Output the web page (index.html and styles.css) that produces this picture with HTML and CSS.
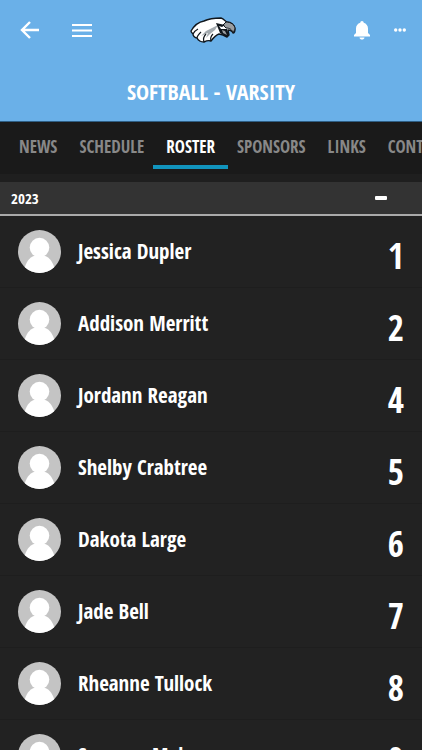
FILE: index.html
```html
<!DOCTYPE html>
<html lang="en">
<head>
    <meta charset="UTF-8" />
    <meta name="viewport" content="width=device-width, initial-scale=1.0" />
    <title>Softball - Varsity</title>
    <link rel="stylesheet" href="styles.css">
</head>
<body>
    <svg class="sprite" aria-hidden="true">
        <symbol id="avatar" viewBox="0 0 44 44">
            <circle cx="22" cy="22" r="22" fill="#c4c4c4"/>
            <ellipse cx="22" cy="18" rx="10" ry="10" fill="#fff"/>
            <path d="M7 38C9 31 13 27 18 26H26C31 27 35 31 37 38A22 22 0 0 1 7 38Z" fill="#fff"/>
        </symbol>
    </svg>

    <header class="header">
        <div class="topbar">
            <div class="side">
                <button class="icon-btn" aria-label="Back">
                    <svg width="20" height="20" viewBox="0 0 20 20" fill="none" stroke="#fff" stroke-width="2.4">
                        <path d="M10 2L2 10L10 18M2 10H19"/>
                    </svg>
                </button>
                <button class="icon-btn" aria-label="Menu">
                    <svg width="20" height="20" viewBox="0 0 20 20" stroke="#fff" stroke-width="2.2">
                        <path d="M0 5H20M0 10.500H20M0 16H20"/>
                    </svg>
                </button>
            </div>
            <a class="logo" href="#" aria-label="Home">
                <svg width="46" height="26" viewBox="0 0 46 26">
                    <path d="M1 14C4 9 8 5 14 4C20 1 26 1 31 1C34 2 35 4 37 5C41 5 45 8 45 12C45 14 45 16 43 16C42 13 40 13 38 13L39 18L37 20L33 18L29 17C26 18 24 20 21 24C18 23 16 24 14 25C11 25 8 23 7 21C5 21 3 19 3 17C2 16 1 15 1 14Z" fill="#fff" stroke="#10161c" stroke-width="1.4" stroke-linejoin="round"/>
                    <path d="M16 14L28 8L25 13L20 17L16 21L18 16L11 19Z" fill="#a4abb0"/>
                    <path d="M36 5C41 5 45 8 45 12L43 16C42 12 39 11 36 11L33 8Z" fill="#9a9da0" stroke="#10161c" stroke-width="1"/>
                    <path d="M3 17C4 15 6 13 8 12M7 21C7 19 9 17 11 15M14 25C13 22 14 19 16 17M21 24C20 21 21 19 23 17" fill="none" stroke="#10161c" stroke-width="1.2"/>
                    <path d="M26 6L35 8L32 10L29 9L31 12L37 12L39 18L37 20L30 16L28 11Z" fill="#10161c"/>
                    <path d="M32 13L35 14L37 18L33 16Z" fill="#9a9da0"/>
                </svg>
            </a>
            <div class="side side-right">
                <button class="icon-btn" aria-label="Notifications">
                    <svg width="16" height="20" viewBox="0 0 16 20" fill="#fff">
                        <path d="M8 1C9 1 9.700 1.800 9.700 2.700C12.400 3.500 14 5.700 14 8.500V13L16 15V16.500H0V15L2 13V8.500C2 5.700 3.600 3.500 6.300 2.700C6.300 1.800 7 1 8 1ZM5.500 17.500H10.500C10.300 19 9.300 19.600 8 19.600C6.700 19.600 5.700 19 5.500 17.500Z"/>
                    </svg>
                </button>
                <button class="icon-btn" aria-label="More">
                    <svg width="12" height="4" viewBox="0 0 12 4" fill="#fff">
                        <circle cx="1.700" cy="2" r="1.700"/>
                        <circle cx="6" cy="2" r="1.700"/>
                        <circle cx="10.300" cy="2" r="1.700"/>
                    </svg>
                </button>
            </div>
        </div>
        <h1 class="title">SOFTBALL - VARSITY</h1>
    </header>

    <nav class="tabs">
        <a class="tab" href="#">NEWS</a>
        <a class="tab" href="#">SCHEDULE</a>
        <a class="tab active" href="#" aria-current="page">ROSTER</a>
        <a class="tab" href="#">SPONSORS</a>
        <a class="tab" href="#">LINKS</a>
        <a class="tab" href="#">CONTACTS</a>
    </nav>

    <main>
        <button class="season" aria-expanded="true">
            <span>2023</span>
            <span class="minus"></span>
        </button>
        <ul class="roster">
            <li class="player"><svg class="avatar"><use href="#avatar"/></svg><span class="name">Jessica Dupler</span><span class="number">1</span></li>
            <li class="player"><svg class="avatar"><use href="#avatar"/></svg><span class="name">Addison Merritt</span><span class="number">2</span></li>
            <li class="player"><svg class="avatar"><use href="#avatar"/></svg><span class="name">Jordann Reagan</span><span class="number">4</span></li>
            <li class="player"><svg class="avatar"><use href="#avatar"/></svg><span class="name">Shelby Crabtree</span><span class="number">5</span></li>
            <li class="player"><svg class="avatar"><use href="#avatar"/></svg><span class="name">Dakota Large</span><span class="number">6</span></li>
            <li class="player"><svg class="avatar"><use href="#avatar"/></svg><span class="name">Jade Bell</span><span class="number">7</span></li>
            <li class="player"><svg class="avatar"><use href="#avatar"/></svg><span class="name">Rheanne Tullock</span><span class="number">8</span></li>
            <li class="player"><svg class="avatar"><use href="#avatar"/></svg><span class="name">Savanna Maley</span><span class="number">9</span></li>
        </ul>
    </main>
</body>
</html>
```
FILE: styles.css
```css
* {
    box-sizing: border-box;
}

html, body {
    height: 100%;
    margin: 0;
    overflow: hidden;
}

body {
    background: #222;
    color: #fff;
    font-family: "Open Sans Condensed", "Noto Sans Condensed", "Roboto Condensed", "Liberation Sans Narrow", "Open Sans", sans-serif;
    font-weight: 700;
}

button {
    padding: 0;
    border: none;
    background: none;
    color: inherit;
    font: inherit;
    cursor: pointer;
}

.sprite {
    display: none;
}

.header {
    background: #6ab0e8;
    border-bottom: 1px solid #2f5f85;
}

.topbar {
    display: grid;
    grid-template-columns: 1fr auto 1fr;
    align-items: center;
    height: 60px;
    padding: 0 16px 0 20px;
}

.side {
    display: flex;
    align-items: center;
    gap: 32px;
}

.side-right {
    justify-content: flex-end;
    gap: 24px;
}

.icon-btn, .logo {
    display: flex;
}

.title {
    margin: 0;
    padding: 15px 0 14px;
    font-size: 22px;
    line-height: 32px;
    text-align: center;
}

.tabs {
    display: flex;
    height: 60px;
    padding: 0 8px;
    background: #1a1a1a;
    border-bottom: 8px solid #1f1f1f;
    overflow: hidden;
}

.tab {
    flex: none;
    height: 47px;
    margin: 0 -2px;
    padding: 0 13px;
    color: #888;
    font-size: 17px;
    line-height: 50px;
    text-decoration: none;
}

.tab.active {
    color: #fff;
    border-bottom: 4px solid #1194bd;
}

.season {
    display: flex;
    align-items: center;
    justify-content: space-between;
    width: 100%;
    height: 34px;
    padding: 0 35px 0 11px;
    background: #333;
    border-bottom: 2px solid #aaa;
    font-size: 15px;
}

.minus {
    width: 12px;
    height: 4px;
    border-radius: 1px;
    background: #fff;
}

.roster {
    margin: 0;
    padding: 0;
    list-style: none;
}

.player {
    display: flex;
    align-items: center;
    height: 72px;
    padding: 0 18px;
    border-bottom: 1px solid #1e1e1e;
}

.avatar {
    width: 43px;
    height: 43px;
    margin-right: 17px;
}

.name {
    flex: 1;
    padding-bottom: 1px;
    font-size: 21px;
}

.number {
    padding-top: 8px;
    font-size: 35px;
    line-height: 40px;
}
```
